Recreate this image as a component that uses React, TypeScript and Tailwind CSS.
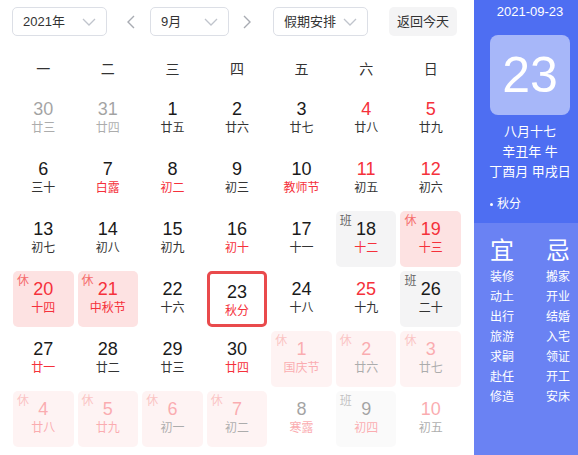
import React from "react";

type Day = {
  d: number;
  l: string;
  m?: "prev" | "next";
  nr?: boolean; // red number
  lr?: boolean; // red lunar text
  tag?: "休" | "班";
  today?: boolean;
};

const DAYS: Day[] = [
  { d: 30, l: "廿三", m: "prev" }, { d: 31, l: "廿四", m: "prev" }, { d: 1, l: "廿五" }, { d: 2, l: "廿六" },
  { d: 3, l: "廿七" }, { d: 4, l: "廿八", nr: true }, { d: 5, l: "廿九", nr: true },
  { d: 6, l: "三十" }, { d: 7, l: "白露", lr: true }, { d: 8, l: "初二", lr: true }, { d: 9, l: "初三" },
  { d: 10, l: "教师节", lr: true }, { d: 11, l: "初五", nr: true }, { d: 12, l: "初六", nr: true },
  { d: 13, l: "初七" }, { d: 14, l: "初八" }, { d: 15, l: "初九" }, { d: 16, l: "初十", lr: true },
  { d: 17, l: "十一" }, { d: 18, l: "十二", lr: true, tag: "班" }, { d: 19, l: "十三", nr: true, lr: true, tag: "休" },
  { d: 20, l: "十四", nr: true, lr: true, tag: "休" }, { d: 21, l: "中秋节", nr: true, lr: true, tag: "休" },
  { d: 22, l: "十六" }, { d: 23, l: "秋分", lr: true, today: true }, { d: 24, l: "十八" },
  { d: 25, l: "十九", nr: true }, { d: 26, l: "二十", tag: "班" },
  { d: 27, l: "廿一", lr: true }, { d: 28, l: "廿二" }, { d: 29, l: "廿三" }, { d: 30, l: "廿四", lr: true },
  { d: 1, l: "国庆节", m: "next", nr: true, lr: true, tag: "休" }, { d: 2, l: "廿六", m: "next", nr: true, tag: "休" },
  { d: 3, l: "廿七", m: "next", nr: true, tag: "休" },
  { d: 4, l: "廿八", m: "next", nr: true, lr: true, tag: "休" }, { d: 5, l: "廿九", m: "next", nr: true, lr: true, tag: "休" },
  { d: 6, l: "初一", m: "next", nr: true, tag: "休" }, { d: 7, l: "初二", m: "next", nr: true, tag: "休" },
  { d: 8, l: "寒露", m: "next", lr: true }, { d: 9, l: "初四", m: "next", lr: true, tag: "班" },
  { d: 10, l: "初五", m: "next", nr: true },
];

const WEEK = ["一", "二", "三", "四", "五", "六", "日"];
const YI = ["装修", "动土", "出行", "旅游", "求嗣", "赴任", "修造"];
const JI = ["搬家", "开业", "结婚", "入宅", "领证", "开工", "安床"];

const ChevronDown = () => (
  <svg width="14" height="8" viewBox="0 0 14 8" fill="none" stroke="#c0c4cc" strokeWidth="1.3">
    <polyline points="1,1 7,7 13,1" />
  </svg>
);

const Arrow = ({ dir }: { dir: "l" | "r" }) => (
  <svg width="9" height="14" viewBox="0 0 9 14" fill="none" stroke="#a8abb2" strokeWidth="1.4">
    {dir === "l" ? <polyline points="8,1 2,7 8,13" /> : <polyline points="1,1 7,7 1,13" />}
  </svg>
);

function Select({ label, w }: { label: string; w: string }) {
  return (
    <div className={`${w} h-[29px] flex items-center justify-between pl-[10px] pr-[10px] border border-[#dcdfe6] rounded-[5px] text-[13px] text-[#333]`}>
      <span>{label}</span>
      <ChevronDown />
    </div>
  );
}

function Cell({ day }: { day: Day }) {
  const bg = day.tag === "休" ? "bg-[#fde2e2]" : day.tag === "班" ? "bg-[#f4f4f5]" : "";
  return (
    <div
      className={`relative h-[56px] rounded-[5px] flex flex-col items-center pt-[7px] ${bg} ${day.m ? "opacity-40" : ""} ${
        day.today ? "border-[3px] border-[#e94a4c] rounded-[3px] pt-[4px]" : ""
      }`}
    >
      {day.tag && (
        <span
          className={`absolute left-[4px] top-[3px] text-[12px] leading-[14px] ${
            day.tag === "休" ? "text-[#f56c6c]" : "text-[#666]"
          }`}
        >
          {day.tag}
        </span>
      )}
      <span className={`text-[18px] leading-[22px] ${day.nr ? "text-[#f5313b]" : "text-[#1a1a1a]"}`}>{day.d}</span>
      <span className={`text-[12px] leading-[16px] ${day.lr ? "text-[#f5313b]" : "text-[#333]"}`}>{day.l}</span>
    </div>
  );
}

export default function App() {
  return (
    <div
      className="w-[578px] h-[455px] overflow-hidden bg-white"
      style={{ fontFamily: '"Liberation Sans", "Noto Sans CJK SC", sans-serif' }}
    >
      <div className="flex w-[586px] h-full">
        {/* Calendar */}
        <div className="w-[474px] shrink-0">
          <div className="flex items-center mt-[7px] pl-[12px]">
            <Select label="2021年" w="w-[95px]" />
            <div className="ml-[19px]"><Arrow dir="l" /></div>
            <div className="ml-[15px]"><Select label="9月" w="w-[79px]" /></div>
            <div className="ml-[14px]"><Arrow dir="r" /></div>
            <div className="ml-[21px]"><Select label="假期安排" w="w-[95px]" /></div>
            <div className="ml-[21px] w-[68px] h-[29px] flex items-center justify-center bg-[#f4f4f5] rounded-[5px] text-[13px] text-[#333]">
              返回今天
            </div>
          </div>

          <div className="grid grid-cols-7 gap-x-[4px] px-[13px] mt-[13px] h-[40px] items-center">
            {WEEK.map((w) => (
              <div key={w} className="text-center text-[14px] text-[#333]">{w}</div>
            ))}
          </div>

          <div className="grid grid-cols-7 gap-[4px] px-[13px] mt-[2px]">
            {DAYS.map((d, i) => (
              <Cell key={i} day={d} />
            ))}
          </div>
        </div>

        {/* Side panel */}
        <div className="w-[112px] shrink-0 flex flex-col text-white">
          <div className="h-[223px] bg-[#4e6ef2] flex flex-col items-center">
            <div className="mt-[3px] text-[13px] leading-[18px]">2021-09-23</div>
            <div className="mt-[14px] w-[80px] h-[80px] rounded-[8px] bg-white/50 flex items-center justify-center text-[50px] leading-none">
              23
            </div>
            <div className="mt-[7px] text-[13px] leading-[20px] text-center">
              <div>八月十七</div>
              <div>辛丑年 牛</div>
              <div>丁酉月 甲戌日</div>
            </div>
            <div className="mt-[14px] self-start pl-[16px] text-[12px] leading-[16px] flex items-center gap-[4px]">
              <span className="w-[3px] h-[3px] rounded-full bg-white" />
              秋分
            </div>
          </div>
          <div className="flex-1 bg-[#6a82f3] flex justify-between px-[16px] pt-[14px]">
            {[{ h: "宜", list: YI }, { h: "忌", list: JI }].map((c) => (
              <div key={c.h} className="flex flex-col items-center">
                <div className="text-[24px] leading-[28px]">{c.h}</div>
                <div className="mt-[2px] text-[12px] leading-[20px] flex flex-col items-center">
                  {c.list.map((t) => (
                    <span key={t}>{t}</span>
                  ))}
                </div>
              </div>
            ))}
          </div>
        </div>
      </div>
    </div>
  );
}
